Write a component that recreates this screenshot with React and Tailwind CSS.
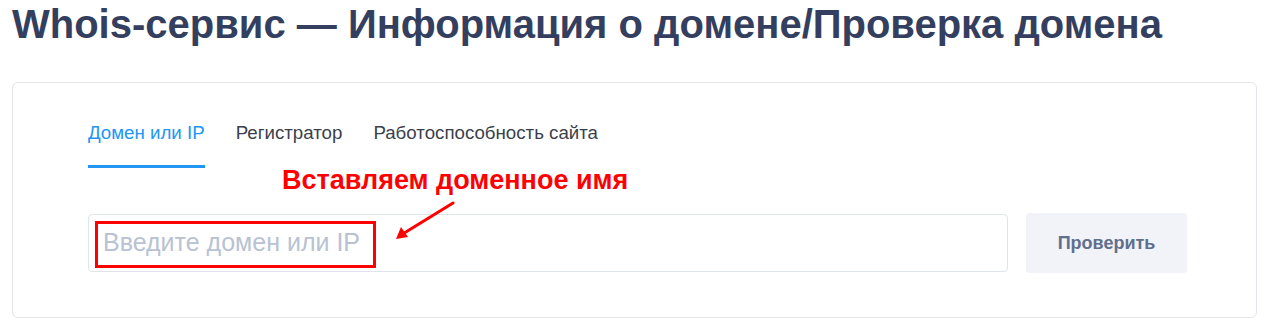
import React from 'react';

const Arrow = () => (
  <svg className="absolute left-[372px] top-[118px]" width="74" height="45" viewBox="0 0 74 45">
    <line x1="68" y1="2" x2="16" y2="34" stroke="#ff0000" strokeWidth="3" strokeLinecap="round" />
    <polygon points="11,38 16,26 23,36" fill="#ff0000" />
  </svg>
);

const App = () => {
  return (
    <div className="w-[1266px] h-[330px] bg-white pl-3 pr-[9px] overflow-hidden" style={{ fontFamily: '"Liberation Sans", Arial, sans-serif' }}>
      <h1 className="text-[40px] leading-[48px] font-bold text-[#343f60]">
        Whois-сервис — Информация о домене/Проверка домена
      </h1>
      <div className="relative mt-[34px] border border-[#e2e5ec] rounded-md pl-[75px] pr-[69px] pt-[38px] pb-[44px]">
        {/* вкладки */}
        <div className="flex gap-[31px] text-[18.7px] leading-[24px]">
          <a href="#" className="text-[#2196f3] pb-[20px] border-b-[3px] border-[#2196f3]">Домен или IP</a>
          <a href="#" className="text-[#3a3f4b] pb-[20px] border-b-[3px] border-transparent">Регистратор</a>
          <a href="#" className="text-[#3a3f4b] pb-[20px] border-b-[3px] border-transparent">Работоспособность сайта</a>
        </div>
        <div className="flex items-center gap-[18px] mt-[45px]">
          <div className="flex-1 h-[58px] border border-[#dfe3ea] rounded-[4px] flex items-center px-[14px]">
            <span className="text-[25px] text-[#b8c2d3]">Введите домен или IP</span>
          </div>
          <button className="w-[161px] h-[60px] bg-[#f1f3f8] rounded-[4px] text-[18px] font-bold text-[#5f6f8d]">
            Проверить
          </button>
        </div>
        {/* пометки поверх */}
        <div className="absolute left-[269px] top-[79px] text-[27px] leading-[36px] font-bold text-[#ff0000] whitespace-nowrap">
          Вставляем доменное имя
        </div>
        <div className="absolute left-[82px] top-[138px] w-[281px] h-[47px] border-[3px] border-[#ff0000]" />
        <Arrow />
      </div>
    </div>
  );
};

export default App;
